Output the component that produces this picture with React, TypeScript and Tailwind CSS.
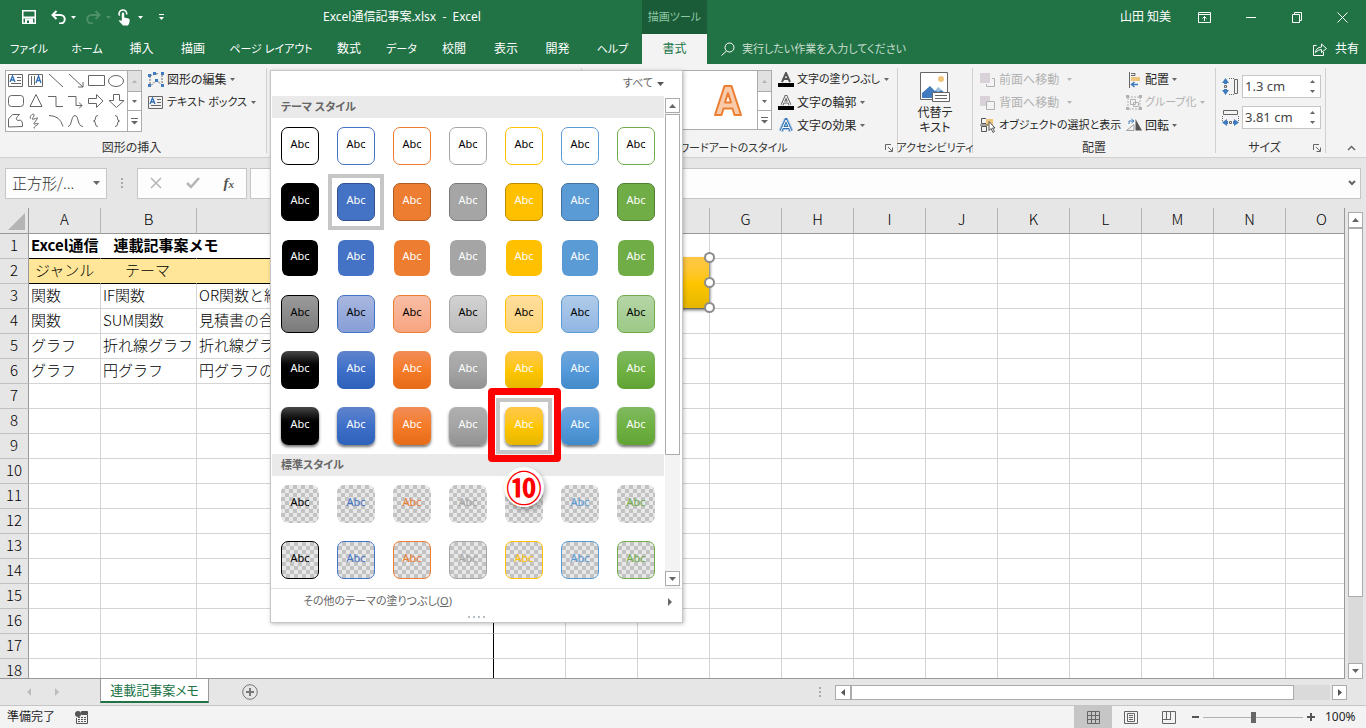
import React from "react";

type Kids = { children?: React.ReactNode };

const UI = "font-['Noto_Sans','Noto_Sans_CJK_JP',sans-serif]";
const CELL = "font-['Noto_Sans_CJK_JP',sans-serif]";

function Icon({ w, h, cls = "", children }: { w: number; h: number; cls?: string } & Kids) {
  return (
    <svg width={w} height={h} viewBox={`0 0 ${w} ${h}`} fill="none" stroke="currentColor" className={`shrink-0 ${cls}`} aria-hidden="true">
      {children}
    </svg>
  );
}

function Caret({ cls = "text-[#666]" }: { cls?: string }) {
  return (
    <Icon w={5} h={3} cls={cls}>
      <path d="M0 0h5L2.500 3z" fill="currentColor" stroke="none" />
    </Icon>
  );
}

/* ---------- title bar and tabs ---------- */

const tabs: [string, string][] = [
  ["ファイル", "w-[58px] text-[11px]"],
  ["ホーム", "w-[58px] text-[11px]"],
  ["挿入", "w-[51px]"],
  ["描画", "w-[52px]"],
  ["ページ レイアウト", "w-[104px] text-[11px]"],
  ["数式", "w-[52px]"],
  ["データ", "w-[53px] text-[11px]"],
  ["校閲", "w-[52px]"],
  ["表示", "w-[52px]"],
  ["開発", "w-[51px]"],
  ["ヘルプ", "w-[59px] text-[11px]"],
];

function Header() {
  return (
    <header className="relative flex h-16 shrink-0 flex-col bg-[#217346] text-xs text-white">
      <div className="flex h-[34px] items-center">
        <div className="flex w-[323px] items-center pl-[22px]">
          <button aria-label="上書き保存" className="w-[29px]">
            <Icon w={14} h={14}>
              <path d="M.75.75h12.500v12.500H.75z" strokeWidth="1.500" />
              <path d="M3 8.500h8V13H3z" fill="#fff" stroke="none" />
              <path d="M1 7.500h12" strokeWidth="2" />
              <path d="M5 10.500h2V13H5z" fill="#217346" stroke="none" />
            </Icon>
          </button>
          <button aria-label="元に戻す" className="flex w-[35px] items-center gap-[5px]">
            <Icon w={15} h={14}>
              <path d="M5.500 1 1.500 5l4 4M2 5h7.500a4 4 0 0 1 0 8.500H8" strokeWidth="2" />
            </Icon>
            <Caret cls="text-white" />
          </button>
          <button aria-label="やり直し" className="flex w-8 items-center gap-[5px] text-[#4d9069]">
            <Icon w={15} h={14}>
              <path d="m9.500 1 4 4-4 4M13 5H5.500a4 4 0 0 0 0 8.500H7" strokeWidth="2" />
            </Icon>
            <Caret cls="text-[#4d9069]" />
          </button>
          <button aria-label="タッチ/マウス モードの切り替え" className="flex w-10 items-center gap-2">
            <Icon w={12} h={17}>
              <path d="M1.600 6.600A3.800 3.800 0 1 1 8.600 5.500" strokeWidth="1.500" />
              <path d="M3.800 4.600a1.200 1.200 0 0 1 2.400 0v4l4.300 1q1.300.4 1.200 2l-.5 2.600L10 16.500H5L.7 11.800q.7-1.400 3.100.2z" fill="#fff" stroke="none" />
            </Icon>
            <Caret cls="text-white" />
          </button>
          <button aria-label="クイック アクセス ツール バーのカスタマイズ">
            <Icon w={7} h={7}>
              <path d="M1 .5h5" />
              <path d="M1 3h5L3.500 6z" fill="currentColor" stroke="none" />
            </Icon>
          </button>
        </div>
        <h1 className="flex-1 whitespace-pre">Excel通信記事案.xlsx&nbsp; -&nbsp; Excel</h1>
        <span className="w-[78px]">山田 知美</span>
        <div className="flex items-center">
          <button aria-label="リボンの表示オプション" className="w-[46px]">
            <Icon w={13} h={11}>
              <path d="M.5.5h12v10H.5zM.5 2.500h12M6.500 9V4.500M4.500 6.500l2-2 2 2" />
            </Icon>
          </button>
          <button aria-label="最小化" className="w-[46px] pl-[2px]">
            <Icon w={10} h={11}>
              <path d="M0 5.500h10" />
            </Icon>
          </button>
          <button aria-label="元に戻す (縮小)" className="w-[46px] pl-[2px]">
            <Icon w={10} h={11}>
              <path d="M.5 2.500h7v8h-7zM2.500 2.500v-2h7v8h-2" />
            </Icon>
          </button>
          <button aria-label="閉じる" className="w-[30px] pl-[1px]">
            <Icon w={11} h={11}>
              <path d="m.5.5 10 10M10.500.5l-10 10" />
            </Icon>
          </button>
        </div>
      </div>
      <nav className="flex h-[30px] items-center">
        {tabs.map(([t, w]) => (
          <button key={t} className={`${w} h-full shrink-0 whitespace-nowrap`}>{t}</button>
        ))}
        <button className="h-full w-[65px] shrink-0 bg-[#f3f3f3] text-[#217346]">書式</button>
        <label className="ml-[14px] flex flex-1 items-center gap-[7px]">
          <Icon w={14} h={14}>
            <circle cx="8.500" cy="5.500" r="4.500" />
            <path d="M5.500 9 .5 13.500" />
          </Icon>
          <input aria-label="操作アシスト" placeholder="実行したい作業を入力してください" className="w-56 bg-transparent text-[11px] outline-none placeholder:text-[#c9decf]" />
        </label>
        <button className="flex items-center gap-2 pr-[7px]">
          <Icon w={14} h={14}>
            <path d="M3.500 3.500h-3v10h10V10" />
            <path d="M2.500 10.500Q3 5.500 8.500 5V2l5 4.500-5 4V7.500Q5 7.500 2.500 10.500z" />
          </Icon>
          共有
        </button>
      </nav>
      <div className="absolute left-[642px] top-0 flex h-[34px] w-[65px] items-center justify-center whitespace-nowrap bg-[#1b5c38] text-[11px] text-[#8fc7a5]">
        描画ツール
      </div>
    </header>
  );
}

/* ---------- ribbon ---------- */

const shapes: React.ReactNode[] = [
  <><path d="M2.500 3.500h14v12h-14zM11 6.500h4M11 9.500h4M5 12.500h10" /><path d="m4 11 2.500-6L9 11M5 9h3" stroke="#2f6fb5" strokeWidth="1.300" /></>,
  <><path d="M2.500 3.500h14v12h-14zM5.500 5v9M8.500 5v9" /><path d="m10 12 2.500-7 2.500 7M11 9.500h3" stroke="#2f6fb5" strokeWidth="1.300" /></>,
  <path d="m3 3 14 13" />,
  <path d="m3 3 14 13M17 11v5h-5" />,
  <path d="M1.500 4.500h16v10h-16z" />,
  <ellipse cx="9" cy="10" rx="7.500" ry="5.500" />,
  <rect x="2.500" y="4.500" width="15" height="11" rx="3" />,
  <path d="m10 3.500-6 12h12z" />,
  <path d="M2 5.500h8v10h7" />,
  <path d="M2 5.500h8v9h6M13 11.500l3 3-3 3" />,
  <path d="M1.500 7.500h8v-4l6.500 6.500-6.500 6.500v-4h-8z" />,
  <path d="M6.500 3.500h6v6h4.500l-7.500 7-7.500-7h4.500z" />,
  <path d="M2.500 16V8l4-4.500h7Q8 8 12 9.500q5-2 4.500 6z" />,
  <path d="M5 8C2 6 8 1 8 4S4 9 8 8s4-2 3 0-5 6-2 5 5-1 2 1-4 3-2 3" />,
  <path d="M3 4.500q11 0 14 11" />,
  <path d="M2 15.500C6 15.500 5 4.500 9 4.500s2 11 8 11" />,
  <path d="M11 4.500Q8.500 4.500 8.500 7q0 3-2 3 2 0 2 3 0 2.500 2.500 2.500" />,
  <path d="M8 4.500q2.500 0 2.500 2.500 0 3 2 3-2 0-2 3 0 2.500-2.500 2.500" />,
];

function GalleryArrows() {
  return (
    <div className="flex w-[14px] flex-col border-l border-[#ababab] text-[#666]">
      <button aria-label="前の行" className="flex h-5 items-center justify-center bg-[#e1e1e1]"><Icon w={5} h={3}><path d="M0 3h5L2.500 0z" fill="#b5b5b5" stroke="none" /></Icon></button>
      <button aria-label="次の行" className="flex h-5 items-center justify-center border-y border-[#ababab]"><Caret /></button>
      <button aria-label="その他" className="flex flex-1 items-center justify-center"><Icon w={7} h={7}><path d="M0 .5h7" /><path d="M0 3h7L3.500 6.500z" fill="currentColor" stroke="none" /></Icon></button>
    </div>
  );
}

function Group({ label, cls, launcher, small, children }: { label: string; cls: string; launcher?: boolean; small?: boolean } & Kids) {
  return (
    <section className={`my-1 flex shrink-0 flex-col border-r border-[#d2d0ce] ${cls}`}>
      <div className="flex min-h-0 flex-1">{children}</div>
      <div className="flex h-[10px] shrink-0 items-center justify-center whitespace-nowrap text-[#333]">
        <span className={`flex-1 text-center ${small ? "text-[11px]" : ""}`}>{label}</span>
        {launcher && (
          <button aria-label={`${label} の詳細`} className="w-3">
            <Icon w={8} h={8} cls="text-[#666]"><path d="M.5 6V.5H6M3 3l4 4M7.500 3.500v4h-4" /></Icon>
          </button>
        )}
      </div>
    </section>
  );
}

type CmdProps = { icon: React.ReactNode; text: string; off?: boolean; small?: boolean; plain?: boolean; gap?: string };

function Cmd({ icon, text, off, small, plain, gap = "gap-1" }: CmdProps) {
  return (
    <button disabled={off} className={`flex h-[23px] items-center gap-[3px] whitespace-nowrap ${small ? "text-[11px]" : ""} ${off ? "text-[#b1b1b1]" : "text-[#262626]"}`}>
      {icon}
      <span className={`flex items-center ${gap}`}>
        {text}
        {!plain && <Caret cls={off ? "text-[#b8b8b8]" : "text-[#666]"} />}
      </span>
    </button>
  );
}

function Spin({ id, label, value, icon }: { id: string; label: string; value: string; icon: React.ReactNode }) {
  return (
    <div className="flex items-center gap-[3px]">
      <label htmlFor={id} aria-label={label}>{icon}</label>
      <div className="flex h-[23px] w-[79px] items-center border border-[#c6c6c6] bg-white">
        <input id={id} defaultValue={value} className="w-[67px] bg-transparent pl-[2px] text-[13px] text-[#444] outline-none" />
        <div className="flex flex-col gap-[7px]">
          <button aria-label="増やす"><Icon w={5} h={3} cls="block"><path d="M0 3h5L2.500 0z" fill="#666" stroke="none" /></Icon></button>
          <button aria-label="減らす"><Icon w={5} h={3} cls="block"><path d="M0 0h5L2.500 3z" fill="#666" stroke="none" /></Icon></button>
        </div>
      </div>
    </div>
  );
}

function Ribbon() {
  return (
    <div className="flex h-[94px] shrink-0 border-b border-[#d2d0ce] bg-[#f3f3f3] text-xs">
      <Group label="図形の挿入" cls="w-[267px] pl-[5px] pr-2">
        <div className="mt-[2px] flex h-[62px] w-[137px] shrink-0 border border-[#ababab] bg-white text-[#666]">
          <div className="grid w-[121px] grid-cols-6">
            {shapes.map((s, i) => (
              <button key={i} aria-label={`図形 ${i + 1}`} className="h-5 w-5"><Icon w={20} h={20}>{s}</Icon></button>
            ))}
          </div>
          <GalleryArrows />
        </div>
        <div className="ml-[6px]">
          <Cmd
            text="図形の編集" gap="gap-[3px]"
            icon={<Icon w={16} h={16} cls="text-[#666]"><path d="M2 3.500 10 1.500M2 4v9M3 13.500l5-5M8 8l6 5M14 3v10" strokeDasharray="2 1" /><path d="M0 2h3v3H0zM13 0h3v3h-3zM5 0h3v3H5zM0 12h3v3H0zM7 7h3v3H7zM13 12h3v3h-3z" fill="#3f7bbd" stroke="none" /></Icon>}
          />
          <Cmd
            small text="テキスト ボックス" gap="gap-1"
            icon={<Icon w={16} h={14} cls="text-[#666]"><path d="M.5.5h14v12H.5zM9 3.500h4M9 6.500h4M3 9.500h10" /><path d="m2 8 2.500-6L7 8M3 6h3" stroke="#2f6fb5" strokeWidth="1.300" /></Icon>}
          />
        </div>
      </Group>
      <div className="my-1 w-[315px] shrink-0 border-r border-[#d2d0ce]" />
      <Group small label="ワードアートのスタイル" cls="w-[316px]" launcher>
        <div className="ml-[11px] mt-[2px] flex h-[60px] w-[179px] shrink-0 border border-[#ababab] bg-white">
          <div className="flex flex-1 items-center justify-end pr-[14px]">
            <Icon w={30} h={33}>
              <path d="M2 31 11.500 2h7L28 31h-6.500l-2-6.500h-9l-2 6.500zM12 18.500h6L15 9z" fill="#f8cbad" stroke="#ed7d31" strokeWidth="2" strokeLinejoin="round" />
            </Icon>
          </div>
          <GalleryArrows />
        </div>
        <div className="ml-[6px]">
          <Cmd small text="文字の塗りつぶし" icon={<Icon w={16} h={16}><path d="m4 10 4-9 4 9M5.500 7h5" stroke="#555" strokeWidth="2" /><path d="M0 11h16v4H0z" fill="#000" stroke="none" /></Icon>} />
          <Cmd text="文字の輪郭" gap="gap-[3px]" icon={<Icon w={16} h={16}><path d="m4 10 4-9 4 9M5.500 7h5" stroke="#666" strokeWidth="3" /><path d="m4 10 4-9 4 9M5.500 7h5" stroke="#fff" /><path d="M0 11h16v4H0z" fill="#000" stroke="none" /></Icon>} />
          <Cmd text="文字の効果" gap="gap-[3px]" icon={<Icon w={16} h={16}><path d="m3 13 5-11 5 11M5 9.500h6" stroke="#a9c9ea" strokeWidth="5" /><path d="m3 13 5-11 5 11M5 9.500h6" stroke="#3572b0" strokeWidth="3" /><path d="m3 13 5-11 5 11M5 9.500h6" stroke="#fff" /></Icon>} />
        </div>
      </Group>
      <Group small label="アクセシビリティ" cls="w-[75px]">
        <button className="flex w-full flex-col items-center gap-[2px] self-start pt-1 leading-[15px] text-[#262626]">
          <Icon w={30} h={31} cls="text-[#666]">
            <path d="M.5.5h27v27H.5z" fill="#fff" />
            <circle cx="21" cy="7" r="3" fill="#efc57b" stroke="none" />
            <path d="M2 26v-5l8-7 5 5 3-4 8 7v4z" fill="#3f7bbd" stroke="none" />
            <path d="m13 17 4-3 5 4-4 2z" fill="#fff" stroke="none" opacity=".5" />
            <path d="M12.500 20.500h17v9h-17zM15 23.500h12M15 26.500h12" fill="#fff" />
          </Icon>
          <span>代替テ<br />キスト</span>
        </button>
      </Group>
      <Group label="配置" cls="w-[243px]">
        <div className="ml-[7px] w-[146px]">
          <Cmd off gap="gap-2" text="前面へ移動" icon={<Icon w={16} h={16}><path d="M0 1h10v10H0z" fill="#d9d2d9" stroke="none" /><path d="M12 6.500h2.500v8h-8V12" /></Icon>} />
          <Cmd off gap="gap-2" text="背面へ移動" icon={<Icon w={16} h={16}><path d="M0 1h10v10H0z" fill="#d9d2d9" stroke="none" /><path d="M6.500 6.500h8v8h-8z" fill="#f3f3f3" /></Icon>} />
          <Cmd small plain text="オブジェクトの選択と表示" icon={<Icon w={16} h={17}><path d="M6 2h7v7H6z" fill="#efc57b" stroke="none" /><path d="M6 1.500H1.500v5H6M1.500 9.500h5v5h-5zM0 8h8" stroke="#555" /><path d="M9 4.500v9l2-2 2 4 1.500-1-2-3.500h2.500z" fill="#fff" stroke="#555" /></Icon>} />
        </div>
        <div>
          <Cmd text="配置" gap="gap-[3px]" icon={<Icon w={16} h={16} cls="text-[#666]"><path d="M3.500 0v16M5 1.500h4v2H5" /><path d="M5 5h9v4H5z" fill="#efc57b" stroke="none" /><path d="M5.500 12.500H12M8.500 10l-3 2.500 3 2.500" stroke="#3f7bbd" strokeWidth="1.500" /></Icon>} />
          <Cmd off small text="グループ化" gap="gap-[3px]" icon={<Icon w={16} h={16}><path d="M2 2h12v12H2z" strokeDasharray="2 1" /><path d="M4.500 4.500h5v5h-5zM7.500 7.500h5v4h-5z" /><path d="M0 0h3v3H0zM13 0h3v3h-3zM0 12h3v3H0zM13 12h3v3h-3z" fill="currentColor" stroke="none" /></Icon>} />
          <Cmd text="回転" gap="gap-[3px]" icon={<Icon w={16} h={16}><path d="M.5 12.500 8 6.500v6z" stroke="#a0a0a0" /><path d="M9.500 1 16 12.500H9.500z" fill="#555" stroke="none" /><path d="M3 6V3h4M5.500 1 8 3 5.500 5" stroke="#3f7bbd" /></Icon>} />
        </div>
      </Group>
      <Group label="サイズ" cls="w-[110px]" launcher>
        <div className="ml-[6px] mt-[7px] flex flex-col gap-2">
          <Spin id="shape-height" label="図形の高さ" value="1.3 cm" icon={<Icon w={17} h={17} cls="text-[#666]"><path d="M12.500 1.500h3v14h-3z" /><path d="M7 .5h5M7 16.500h5" strokeDasharray="1 1" /><path d="M2.500 7.500h2v2h-2z" /><path d="M0 5h2v1h3V5h2L3.500 0zM0 12h2v-1h3v1h2l-3.500 5z" fill="#3f7bbd" stroke="none" /></Icon>} />
          <Spin id="shape-width" label="図形の幅" value="3.81 cm" icon={<Icon w={17} h={17} cls="text-[#666]"><path d="M1.500 1.500h14v4h-14z" /><path d="M.5 7v5M16.500 7v5" strokeDasharray="1 1" /><path d="M7.500 12.500h2v2h-2z" /><path d="M5 10v2h1v3H5v2l-5-3.500zM12 10v2h-1v3h1v2l5-3.500z" fill="#3f7bbd" stroke="none" /></Icon>} />
        </div>
      </Group>
      <button aria-label="リボンを折りたたむ" className="ml-auto mr-[10px] self-end pb-1 text-[#666]">
        <Icon w={9} h={9}><path d="m1 6 3.500-3.500L8 6" strokeWidth="1.500" /></Icon>
      </button>
    </div>
  );
}

/* ---------- formula bar ---------- */

function FormulaBar() {
  return (
    <div className="flex h-[50px] shrink-0 items-center bg-[#e6e6e6] px-[5px]">
      <div className="flex h-[31px] w-[102px] items-center border border-[#c6c6c6] bg-[#fdfdfd]">
        <input aria-label="名前ボックス" defaultValue="正方形/..." className={`w-[87px] bg-transparent pl-[6px] text-[15px] font-light text-[#333] outline-none ${CELL}`} />
        <Icon w={7} h={4}><path d="M0 0h7L3.500 4z" fill="#666" stroke="none" /></Icon>
      </div>
      <Icon w={30} h={12} cls="text-[#aaa]"><path d="M15 1v2M15 5v2M15 9v2" strokeWidth="2" /></Icon>
      <div className="flex h-[31px] w-[110px] items-center justify-between border border-[#c6c6c6] bg-[#fdfdfd] px-3">
        <button aria-label="キャンセル"><Icon w={12} h={12} cls="text-[#b5b5b5]"><path d="m1 1 10 10M11 1 1 11" strokeWidth="1.500" /></Icon></button>
        <button aria-label="入力"><Icon w={14} h={12} cls="text-[#b5b5b5]"><path d="m1 6 4 4 8-9" strokeWidth="2.500" /></Icon></button>
        <button aria-label="関数の挿入" className="font-['Liberation_Serif',serif] text-[15px] font-bold italic leading-none text-[#555]">f<span className="text-[11px]">x</span></button>
      </div>
      <div className="ml-[3px] flex h-[31px] flex-1 items-center border border-[#c6c6c6] bg-[#fdfdfd] pr-1">
        <input aria-label="数式バー" className="flex-1 bg-transparent outline-none" />
        <button aria-label="数式バーの展開"><Icon w={8} h={6} cls="text-[#666]"><path d="m1 1 3 3 3-3" strokeWidth="2" /></Icon></button>
      </div>
    </div>
  );
}

/* ---------- worksheet ---------- */

const columns: [string, string][] = [
  ["A", "w-[72px]"],
  ["B", "w-[96px]"],
  ["C", "w-[297px]"],
  ...["D", "E", "F", "G", "H", "I", "J", "K", "L", "M", "N", "O"].map((c): [string, string] => [c, "w-[72px]"]),
];

const data: Record<number, string[]> = {
  1: ["Excel通信　連載記事案メモ"],
  2: ["ジャンル", "テーマ"],
  3: ["関数", "IF関数", "OR関数と組"],
  4: ["関数", "SUM関数", "見積書の合"],
  5: ["グラフ", "折れ線グラフ", "折れ線グラ"],
  6: ["グラフ", "円グラフ", "円グラフの"],
};

function cellBorder(row: number, col: number) {
  const bottom = col < 3 && row < 3 ? "border-b-black" : "border-b-[#d4d4d4]";
  const right = col === 2 ? "border-r-black" : col < 2 && row < 3 ? (row === 2 ? "border-r-[#ffe699]" : "border-r-white") : "border-r-[#d4d4d4]";
  return `${bottom} ${right}`;
}

function Sheet() {
  return (
    <div className="flex min-h-0 flex-1 bg-[#e6e6e6]">
      <div className="relative min-w-0 flex-1 overflow-hidden border-b border-r border-[#999]">
        <table className={`w-[1358px] table-fixed border-separate border-spacing-0 text-[15px] leading-[22px] [font-feature-settings:normal] ${CELL}`}>
          <thead>
            <tr className="h-[26px] bg-[#e6e6e6]">
              <th className="w-[29px] border-b border-r border-[#999] p-0 align-bottom" aria-label="すべて選択">
                <Icon w={20} h={20} cls="ml-auto"><path d="M17 0v17H0z" fill="#b4b4b4" stroke="none" /></Icon>
              </th>
              {columns.map(([c, w]) => (
                <th key={c} scope="col" className={`${w} border-b border-r border-b-[#999] border-r-[#b5b5b5] p-0 align-top font-light text-black`}>{c}</th>
              ))}
            </tr>
          </thead>
          <tbody>
            {Array.from({ length: 18 }, (_, i) => i + 1).map((r) => (
              <tr key={r} className={`h-[25px] bg-white ${r === 1 ? "font-bold" : "font-light"}`}>
                <th scope="row" className="h-[25px] border-b border-r border-b-[#c0c0c0] border-r-[#999] bg-[#e6e6e6] p-0 align-top font-light text-black">{r}</th>
                {columns.map(([c], ci) => (
                  <td
                    key={c}
                    className={`h-[25px] whitespace-nowrap border-b border-r p-0 align-top ${r === 2 ? "pl-[6px]" : "pl-[2px]"} ${cellBorder(r, ci)} ${r === 2 && ci < 3 ? "bg-[#ffe699]" : ""}`}
                  >
                    {r === 2 && ci === 1 ? <span className="pl-[18px]">{data[r][ci]}</span> : data[r]?.[ci]}
                  </td>
                ))}
              </tr>
            ))}
          </tbody>
        </table>
        <div className="absolute left-[566px] top-[49px] h-[51px] w-[144px] border-r border-[#999] bg-linear-to-b from-[#ffc746] via-[#ffc600] to-[#e5b600] shadow-[0_2px_3px_rgba(0,0,0,0.6)]">
          <div className="absolute -bottom-[5px] -right-[6px] -top-[5px] flex flex-col justify-between">
            <span className="size-[11px] rounded-full border-2 border-[#8c8c8c] bg-white" />
            <span className="size-[11px] rounded-full border-2 border-[#8c8c8c] bg-white" />
            <span className="size-[11px] rounded-full border-2 border-[#8c8c8c] bg-white" />
          </div>
        </div>
      </div>
      <div className="flex w-[21px] flex-col pl-[3px] pr-[3px] pt-1">
        <button aria-label="上へスクロール" className="flex h-4 items-center justify-center border border-[#ababab] bg-white"><Icon w={7} h={4}><path d="M0 4h7L3.500 0z" fill="#666" stroke="none" /></Icon></button>
        <div className="flex flex-1 flex-col bg-[#dadada] pb-[66px]"><div className="flex-1 border border-[#ababab] bg-white" /></div>
        <button aria-label="下へスクロール" className="flex h-4 items-center justify-center border border-[#ababab] bg-white"><Icon w={7} h={4}><path d="M0 0h7L3.500 4z" fill="#666" stroke="none" /></Icon></button>
      </div>
    </div>
  );
}

function SheetTabs() {
  return (
    <div className="flex h-[27px] shrink-0 border-b border-[#c6c6c6] bg-[#e6e6e6]">
      <div className="flex w-[100px] items-center gap-6 pl-[27px]">
        <button aria-label="前のシート"><Icon w={4} h={8}><path d="M4 0v8L0 4z" fill="#bcbcbc" stroke="none" /></Icon></button>
        <button aria-label="次のシート"><Icon w={4} h={8}><path d="M0 0v8l4-4z" fill="#bcbcbc" stroke="none" /></Icon></button>
      </div>
      <button className="h-6 w-[109px] whitespace-nowrap border-x border-b-2 border-x-[#999] border-b-[#217346] bg-white text-[13px] leading-none text-[#217346]">連載記事案メモ</button>
      <button aria-label="新しいシート" className="ml-[33px]">
        <Icon w={16} h={16} cls="text-[#777]"><circle cx="8" cy="8" r="7.300" /><path d="M8 4v8M4 8h8" strokeWidth="2" /></Icon>
      </button>
      <div className="ml-auto flex w-[547px] items-center">
        <Icon w={16} h={12} cls="text-[#aaa]"><path d="M1 1v2M1 5v2M1 9v2" strokeWidth="2" /></Icon>
        <button aria-label="左へスクロール" className="flex h-[15px] w-4 shrink-0 items-center justify-center border border-[#ababab] bg-white"><Icon w={4} h={7}><path d="M4 0v7L0 3.500z" fill="#555" stroke="none" /></Icon></button>
        <div className="flex h-[15px] flex-1 bg-[#dadada] pr-9"><div className="flex-1 border border-[#ababab] bg-white" /></div>
        <button aria-label="右へスクロール" className="ml-[2px] mr-[19px] flex h-[15px] w-[15px] shrink-0 items-center justify-center border border-[#ababab] bg-white"><Icon w={4} h={7}><path d="M0 0v7l4-3.500z" fill="#555" stroke="none" /></Icon></button>
      </div>
    </div>
  );
}

function StatusBar() {
  return (
    <footer className="flex h-[22px] shrink-0 items-center bg-[#f3f3f3] text-xs text-[#262626]">
      <span className="w-[75px] pl-[7px]">準備完了</span>
      <button aria-label="マクロの記録">
        <Icon w={13} h={13} cls="text-[#555]"><circle cx="3" cy="3" r="3" fill="currentColor" stroke="none" /><path d="M1.500 7v5.500h11V4M7 2h6" /><path d="M6.500.5h6v3h-6z" fill="currentColor" /><path d="M3 6.500h9M3 8.500h9M3 10.500h9" strokeDasharray="2 1" /></Icon>
      </button>
      <div className="ml-auto flex h-full items-center">
        <button aria-label="標準" className="flex h-full w-[38px] items-center justify-center bg-[#c6c6c6] text-[#666]"><Icon w={13} h={13}><path d="M.5.5h12v12H.5zM.5 4.500h12M.5 8.500h12M4.500.5v12M8.500.5v12" /></Icon></button>
        <button aria-label="ページ レイアウト" className="flex w-[38px] justify-center text-[#666]"><Icon w={14} h={13}><path d="M.5.5h13v12H.5zM3.500 2.500h7v8h-7zM5 4.500h4M5 6.500h4M5 8.500h4" /></Icon></button>
        <button aria-label="改ページ プレビュー" className="flex w-[38px] justify-center text-[#666]"><Icon w={14} h={13}><path d="M.5.5h13v12H.5zM4.500.5v8M8.500.5v8M1 8.500h8" /></Icon></button>
        <button aria-label="縮小" className="ml-1"><Icon w={7} h={8} cls="text-[#555]"><path d="M0 4h7" strokeWidth="2" /></Icon></button>
        <input
          type="range" aria-label="ズーム" min={0} max={100} defaultValue={50}
          className="mx-1 h-4 w-[100px] appearance-none bg-[linear-gradient(#b0b0b0,#b0b0b0)] bg-[length:100%_1px] bg-center bg-no-repeat [&::-webkit-slider-thumb]:h-[11px] [&::-webkit-slider-thumb]:w-[5px] [&::-webkit-slider-thumb]:appearance-none [&::-webkit-slider-thumb]:bg-[#666]"
        />
        <button aria-label="拡大"><Icon w={8} h={8} cls="text-[#555]"><path d="M0 4h8M4 0v8" strokeWidth="2" /></Icon></button>
        <span className="w-[51px] pl-[10px]">100%</span>
      </div>
    </footer>
  );
}

/* ---------- shape style gallery ---------- */

const glossy = [
  "from-[#484848] via-black to-black",
  "from-[#6083cb] via-[#3e70ca] to-[#2e61ba]",
  "from-[#f18c55] via-[#f67b28] to-[#e56b17]",
  "from-[#afafaf] via-[#a5a5a5] to-[#929292]",
  "from-[#ffc746] via-[#ffc600] to-[#e5b600]",
  "from-[#71a6db] via-[#559bdb] to-[#438ac9]",
  "from-[#81b861] via-[#6fb242] to-[#61a235]",
].map((c) => `bg-linear-to-b ${c} text-white`);

const themeRows: string[][] = [
  ["border-black", "border-[#4472c4]", "border-[#ed7d31]", "border-[#a5a5a5]", "border-[#ffc000]", "border-[#5b9bd5]", "border-[#70ad47]"].map((c) => `border ${c} bg-white text-black`),
  [
    "bg-black border-black",
    "bg-[#4472c4] border-[#2f528f]",
    "bg-[#ed7d31] border-[#ae5a21]",
    "bg-[#a5a5a5] border-[#787878]",
    "bg-[#ffc000] border-[#bc8c00]",
    "bg-[#5b9bd5] border-[#41719c]",
    "bg-[#70ad47] border-[#507e32]",
  ].map((c) => `border ${c} text-white`),
  ["bg-black", "bg-[#4472c4]", "bg-[#ed7d31]", "bg-[#a5a5a5]", "bg-[#ffc000]", "bg-[#5b9bd5]", "bg-[#70ad47]"].map((c) => `border border-white bg-clip-padding ${c} text-white`),
  [
    "from-[#9b9b9b] to-[#7b7b7b] border-black",
    "from-[#a8b7df] to-[#879ed7] border-[#4472c4]",
    "from-[#f7bda4] to-[#f8a581] border-[#ed7d31]",
    "from-[#d2d2d2] to-[#bdbdbd] border-[#a5a5a5]",
    "from-[#ffdd9c] to-[#ffd479] border-[#ffc000]",
    "from-[#b0cbe9] to-[#91b6e3] border-[#5b9bd5]",
    "from-[#b5d5a7] to-[#9cca86] border-[#70ad47]",
  ].map((c) => `border bg-linear-to-b ${c} text-black`),
  glossy,
  glossy.map((c) => `${c} shadow-[0_2px_3px_rgba(0,0,0,0.55)]`),
];

const checker = "bg-[repeating-conic-gradient(#c2c2c2_0_25%,#e8e8e8_0_50%)] bg-[length:8px_8px]";
const ink = ["text-black", "text-[#4472c4]", "text-[#ed7d31]", "text-[#a5a5a5]", "text-[#ffc000]", "text-[#5b9bd5]", "text-[#70ad47]"];
const presetRows: string[][] = [
  ink.map((c) => `${checker} ${c}`),
  ink.map((c) => `${checker} border border-current ${c}`),
];

function Swatches({ rows, name, boxed, marked }: { rows: string[][]; name: string; boxed?: string[]; marked?: string }) {
  return (
    <div className="grid grid-cols-7">
      {rows.flatMap((row, r) =>
        row.map((c, i) => {
          const key = `${r}-${i}`;
          return (
            <button key={key} aria-label={`${name} Abc ${r + 1}-${i + 1}`} className={`relative flex size-14 items-center justify-center bg-white ${marked === key ? "z-10" : ""}`}>
              <span className={`flex size-[38px] items-center justify-center rounded-[7px] pb-[6px] text-[11px] leading-none ${c}`}>Abc</span>
              {boxed?.includes(key) && <span className="absolute inset-0 border-4 border-[#c6c6c6]" />}
              {marked === key && <span className="absolute -bottom-2 -left-2 -right-[9px] -top-[10px] rounded-[4px] border-[7px] border-[#ff0000]" />}
            </button>
          );
        }),
      )}
    </div>
  );
}

function StylePopup() {
  return (
    <div className="absolute left-[270px] top-[70px] z-20 w-[413px] border border-[#c6c6c6] bg-white text-xs text-[#666] shadow-[1px_1px_4px_rgba(0,0,0,0.25)]">
      <div className="flex h-[25px] items-center justify-end pr-[18px]">
        <button className="flex items-center gap-1 text-[11px]">すべて <Icon w={7} h={4}><path d="M0 0h7L3.500 4z" fill="#555" stroke="none" /></Icon></button>
      </div>
      <div className="flex pl-px">
        <div className="relative w-[392px]">
          <h2 className="flex h-[22px] items-center bg-[#eaeaea] pl-[9px] text-[11px] font-bold">テーマ スタイル</h2>
          <Swatches name="テーマ スタイル" rows={themeRows} boxed={["1-1", "5-4"]} marked="5-4" />
          <h2 className="flex h-[22px] items-center bg-[#eaeaea] pl-[9px] text-[11px] font-bold">標準スタイル</h2>
          <Swatches name="標準スタイル" rows={presetRows} />
          <div className={`absolute left-[232px] top-[371px] z-20 flex size-10 items-center justify-center rounded-full bg-white pb-[2px] text-[36px] font-bold leading-none text-[#ff0000] shadow-[2px_3px_5px_rgba(0,0,0,0.3)] ${CELL}`}>
            ⑩
          </div>
        </div>
        <div className="ml-px mt-[2px] flex w-[15px] flex-col bg-[#f3f3f3] pb-[2px]">
          <button aria-label="上へ" className="flex h-[15px] items-center justify-center border border-[#ababab] bg-white"><Icon w={7} h={4}><path d="M0 4h7L3.500 0z" fill="#666" stroke="none" /></Icon></button>
          <div className="mt-px h-[341px] border border-[#ababab] bg-white" />
          <button aria-label="下へ" className="mt-auto flex h-[15px] items-center justify-center border border-[#ababab] bg-white"><Icon w={7} h={4}><path d="M0 0h7L3.500 4z" fill="#666" stroke="none" /></Icon></button>
        </div>
      </div>
      <button className="flex h-[26px] w-full items-center justify-between border-t border-[#e1e1e1] pl-8 pr-[10px] text-[11px]">
        <span>その他のテーマの塗りつぶし(<u>O</u>)</span>
        <Icon w={4} h={8}><path d="M0 0v8l4-4z" fill="#666" stroke="none" /></Icon>
      </button>
      <div className="flex h-2 justify-center gap-[3px] pt-[2px]">
        {[0, 1, 2, 3].map((i) => <span key={i} className="size-[2px] bg-[#b9bfc9]" />)}
      </div>
    </div>
  );
}

export default function App() {
  return (
    <div className={`relative flex h-screen flex-col overflow-hidden bg-[#e6e6e6] [font-feature-settings:'palt'] ${UI}`}>
      <Header />
      <Ribbon />
      <FormulaBar />
      <Sheet />
      <SheetTabs />
      <StatusBar />
      <StylePopup />
    </div>
  );
}
